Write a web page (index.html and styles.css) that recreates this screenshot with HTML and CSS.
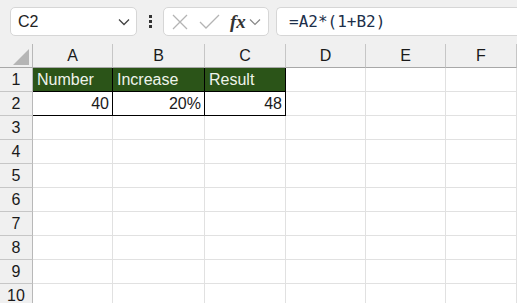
FILE: index.html
```html
<!DOCTYPE html>
<html lang="en">
<head>
  <meta charset="UTF-8" />
  <title>Sheet</title>
  <link rel="stylesheet" href="styles.css">
</head>
<body>

<div class="toolbar">
  <div class="namebox">
    <span>C2</span>
    <svg class="chev" width="12" height="8" viewBox="0 0 12 8"><path d="M1 1.5 L6 6.5 L11 1.5" fill="none" stroke="#444" stroke-width="1.3"/></svg>
  </div>
  <div class="dots"><i></i><i></i><i></i></div>
  <div class="iconbox">
    <svg width="16" height="16" viewBox="0 0 16 16"><path d="M1 1 L15 15 M15 1 L1 15" stroke="#b4b4b4" stroke-width="1.3"/></svg>
    <svg width="21" height="16" viewBox="0 0 21 16"><path d="M1 8 L7 14 L20 1" fill="none" stroke="#b4b4b4" stroke-width="1.3"/></svg>
    <span class="fx">fx</span>
    <svg width="12" height="8" viewBox="0 0 12 8"><path d="M1 1.5 L6 6.5 L11 1.5" fill="none" stroke="#888" stroke-width="1.2"/></svg>
  </div>
  <div class="formula">=A2*(1+B2)</div>
</div>

<div class="sheet">
  <div class="corner"><span class="tri"></span></div>
  <div class="colhead">A</div>
  <div class="colhead">B</div>
  <div class="colhead">C</div>
  <div class="colhead">D</div>
  <div class="colhead">E</div>
  <div class="colhead">F</div>

  <div class="rowhead">1</div>
  <div class="cell title">Number</div>
  <div class="cell title">Increase</div>
  <div class="cell title">Result</div>
  <div class="cell"></div><div class="cell"></div><div class="cell"></div>

  <div class="rowhead">2</div>
  <div class="cell data">40</div>
  <div class="cell data">20%</div>
  <div class="cell data">48</div>
  <div class="cell"></div><div class="cell"></div><div class="cell"></div>

  <div class="rowhead">3</div><div class="cell"></div><div class="cell"></div><div class="cell"></div><div class="cell"></div><div class="cell"></div><div class="cell"></div>
  <div class="rowhead">4</div><div class="cell"></div><div class="cell"></div><div class="cell"></div><div class="cell"></div><div class="cell"></div><div class="cell"></div>
  <div class="rowhead">5</div><div class="cell"></div><div class="cell"></div><div class="cell"></div><div class="cell"></div><div class="cell"></div><div class="cell"></div>
  <div class="rowhead">6</div><div class="cell"></div><div class="cell"></div><div class="cell"></div><div class="cell"></div><div class="cell"></div><div class="cell"></div>
  <div class="rowhead">7</div><div class="cell"></div><div class="cell"></div><div class="cell"></div><div class="cell"></div><div class="cell"></div><div class="cell"></div>
  <div class="rowhead">8</div><div class="cell"></div><div class="cell"></div><div class="cell"></div><div class="cell"></div><div class="cell"></div><div class="cell"></div>
  <div class="rowhead">9</div><div class="cell"></div><div class="cell"></div><div class="cell"></div><div class="cell"></div><div class="cell"></div><div class="cell"></div>
  <div class="rowhead">10</div><div class="cell"></div><div class="cell"></div><div class="cell"></div><div class="cell"></div><div class="cell"></div><div class="cell"></div>
</div>

</body>
</html>
```

FILE: styles.css
```css
body {
  margin: 0;
  font-family: 'Liberation Sans', Arial, sans-serif;
  background: #fff;
  overflow: hidden;
  width: 517px;
  height: 303px;
}
.toolbar {
  height: 44px;
  background: #f0f0f0;
  display: flex;
  align-items: flex-start;
  padding: 7px 0 0 10px;
  box-sizing: border-box;
}
.namebox {
  width: 127px;
  height: 29px;
  box-sizing: border-box;
  background: #fff;
  border: 1px solid #d6d6d6;
  border-radius: 5px;
  display: flex;
  align-items: center;
  justify-content: space-between;
  padding: 0 6px 0 7px;
  font-size: 16px;
  color: #222;
}
.dots {
  width: 26px;
  display: flex;
  flex-direction: column;
  align-items: center;
  gap: 2px;
  padding-top: 8px;
}
.dots i {
  width: 3px;
  height: 3px;
  background: #333;
}
.iconbox {
  width: 106px;
  height: 29px;
  box-sizing: border-box;
  background: #fff;
  border: 1px solid #d6d6d6;
  border-radius: 5px;
  display: flex;
  align-items: center;
  gap: 11px;
  padding: 0 0 0 8px;
}
.fx {
  font-family: 'Liberation Serif', serif;
  font-style: italic;
  font-weight: bold;
  font-size: 19px;
  color: #333;
  margin-left: -1px;
  margin-right: -8px;
}
.formula {
  margin-left: 7px;
  flex: 1;
  height: 29px;
  box-sizing: border-box;
  background: #fff;
  border: 1px solid #d6d6d6;
  border-right: none;
  border-radius: 5px 0 0 5px;
  padding-left: 12px;
  font-family: 'DejaVu Sans Mono', monospace;
  font-size: 16px;
  line-height: 27px;
  color: #1c2f4a;
}
.sheet {
  display: grid;
  grid-template-columns: 33px 80px 92px 81px 80px 80px 71px;
  grid-auto-rows: 24px;
  font-size: 16px;
  color: #1a1a1a;
}
.sheet > div {
  box-sizing: border-box;
}
.corner {
  background: #f0f0f0;
  border-right: 1px solid #b8b8b8;
  border-bottom: 1px solid #a8a8a8;
  position: relative;
}
.tri {
  position: absolute;
  right: 3px;
  bottom: 2px;
  width: 0;
  height: 0;
  border-left: 16px solid transparent;
  border-bottom: 16px solid #b5b5b5;
}
.colhead {
  background: #f0f0f0;
  border-right: 1px solid #c6c6c6;
  border-bottom: 1px solid #a8a8a8;
  text-align: center;
  line-height: 24px;
}
.rowhead {
  background: #f0f0f0;
  border-right: 1px solid #b8b8b8;
  border-bottom: 1px solid #c6c6c6;
  text-align: center;
  line-height: 24px;
}
.cell {
  border-right: 1px solid #e1e1e1;
  border-bottom: 1px solid #e1e1e1;
  line-height: 24px;
  padding: 0 3px 0 4px;
  white-space: nowrap;
}
.title {
  background: #2b5418;
  color: #eef3ea;
  border-right: 1px solid #000;
  border-bottom: 1px solid #000;
}
.data {
  text-align: right;
  border-right: 1px solid #000;
  border-bottom: 1px solid #000;
}
```
